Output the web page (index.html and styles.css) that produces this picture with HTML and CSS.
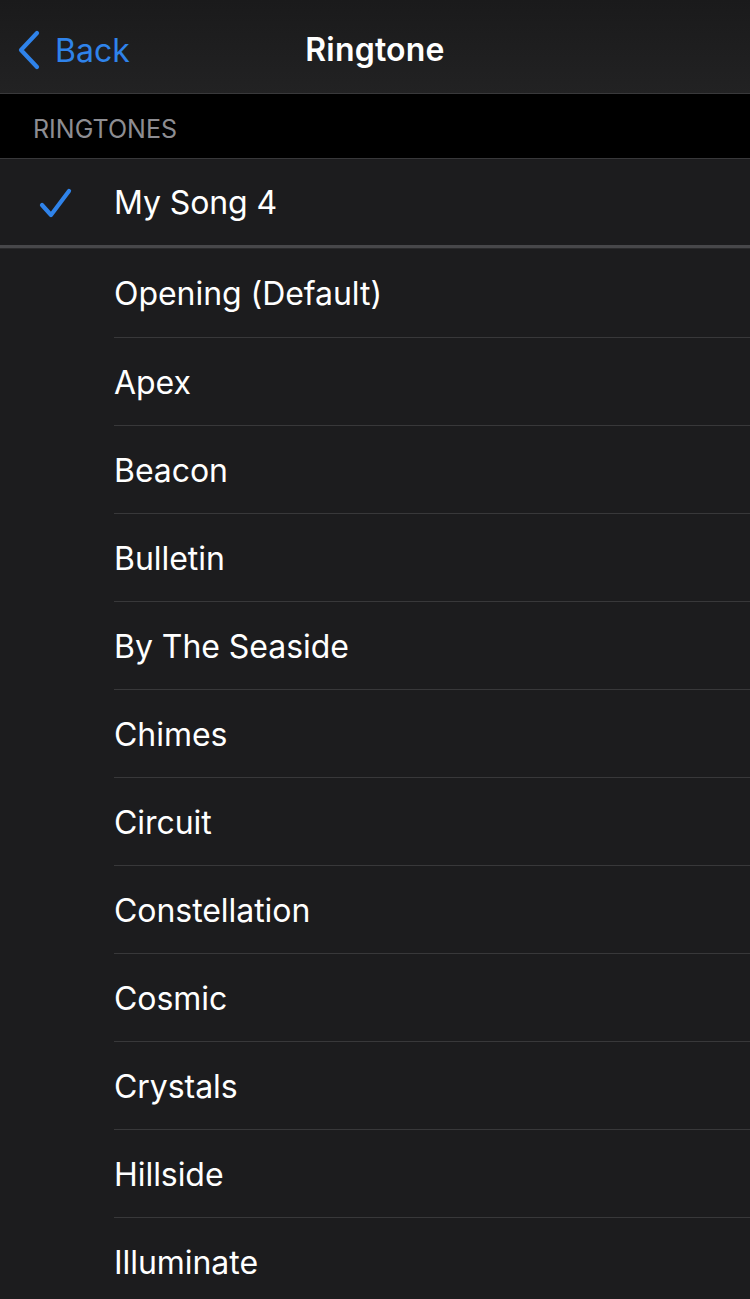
FILE: index.html
```html
<!DOCTYPE html>
<html>
<head>
<meta charset="utf-8">
<link rel="stylesheet" href="styles.css">
</head>
<body>
<div class="screen">
  <header class="navbar">
    <a class="back">
      <svg class="chev" width="26" height="40" viewBox="0 0 26 40"><path d="M21 3 L5 20 L21 37" fill="none" stroke="#2f83ea" stroke-width="4.2" stroke-linecap="round" stroke-linejoin="round"/></svg>
      <span>Back</span>
    </a>
    <h1 class="title">Ringtone</h1>
  </header>
  <div class="section-header">RINGTONES</div>
  <div class="selected-row">
    <svg class="check" width="36" height="32" viewBox="0 0 36 32"><path d="M4 18 L13 28 L31 4" fill="none" stroke="#2f83ea" stroke-width="4.2" stroke-linecap="round" stroke-linejoin="round"/></svg>
    <span class="label">My Song 4</span>
  </div>
  <div class="thick-sep"></div>
  <ul class="list">
    <li>Opening (Default)</li>
    <li>Apex</li>
    <li>Beacon</li>
    <li>Bulletin</li>
    <li>By The Seaside</li>
    <li>Chimes</li>
    <li>Circuit</li>
    <li>Constellation</li>
    <li>Cosmic</li>
    <li>Crystals</li>
    <li>Hillside</li>
    <li>Illuminate</li>
  </ul>
</div>
</body>
</html>
```

FILE: styles.css
```css
* { box-sizing: border-box; }
html, body { margin: 0; padding: 0; background: #1c1c1e; }
body { font-family: Inter, "Noto Sans", sans-serif; color: #fff; width: 750px; height: 1299px; overflow: hidden; }
.screen { width: 750px; }
.navbar {
  height: 94px;
  background: linear-gradient(180deg, #1a1a1b, #222223);
  border-bottom: 1px solid #39393b;
  position: relative;
  display: flex;
  align-items: center;
  justify-content: center;
}
.back {
  position: absolute;
  left: 16px;
  top: 29px;
  display: flex;
  align-items: center;
  gap: 13px;
  color: #2f83ea;
  font-size: 32px;
  letter-spacing: 0;
}
.back span { line-height: 40px; margin-top: 2px; }
.title { margin: 0; font-size: 32px; font-weight: 600; letter-spacing: 0.2px; color: #fff; line-height: 40px; margin-top: 6px; }
.section-header {
  height: 65px;
  background: #000;
  color: #8d8d92;
  font-size: 25px;
  padding-left: 33px;
  padding-top: 20px;
  border-bottom: 1px solid #38383a;
  letter-spacing: 0;
}
.selected-row {
  height: 86px;
  display: flex;
  align-items: center;
  background: #1c1c1e;
}
.check { margin-left: 38px; margin-right: 40px; margin-top: 2px; }
.label { font-size: 32px; letter-spacing: -0.1px; }
.thick-sep { height: 4px; background: #47474a; border-bottom: 1px solid #2a2a2c; }
.list { list-style: none; margin: 0; padding: 0 0 0 114px; }
.list li {
  height: 88px;
  display: flex;
  align-items: center;
  font-size: 32px;
  letter-spacing: -0.05px;
  border-bottom: 1px solid #38383a;
  padding-top: 1px;
}
.list li:first-child { height: 89px; }
```
